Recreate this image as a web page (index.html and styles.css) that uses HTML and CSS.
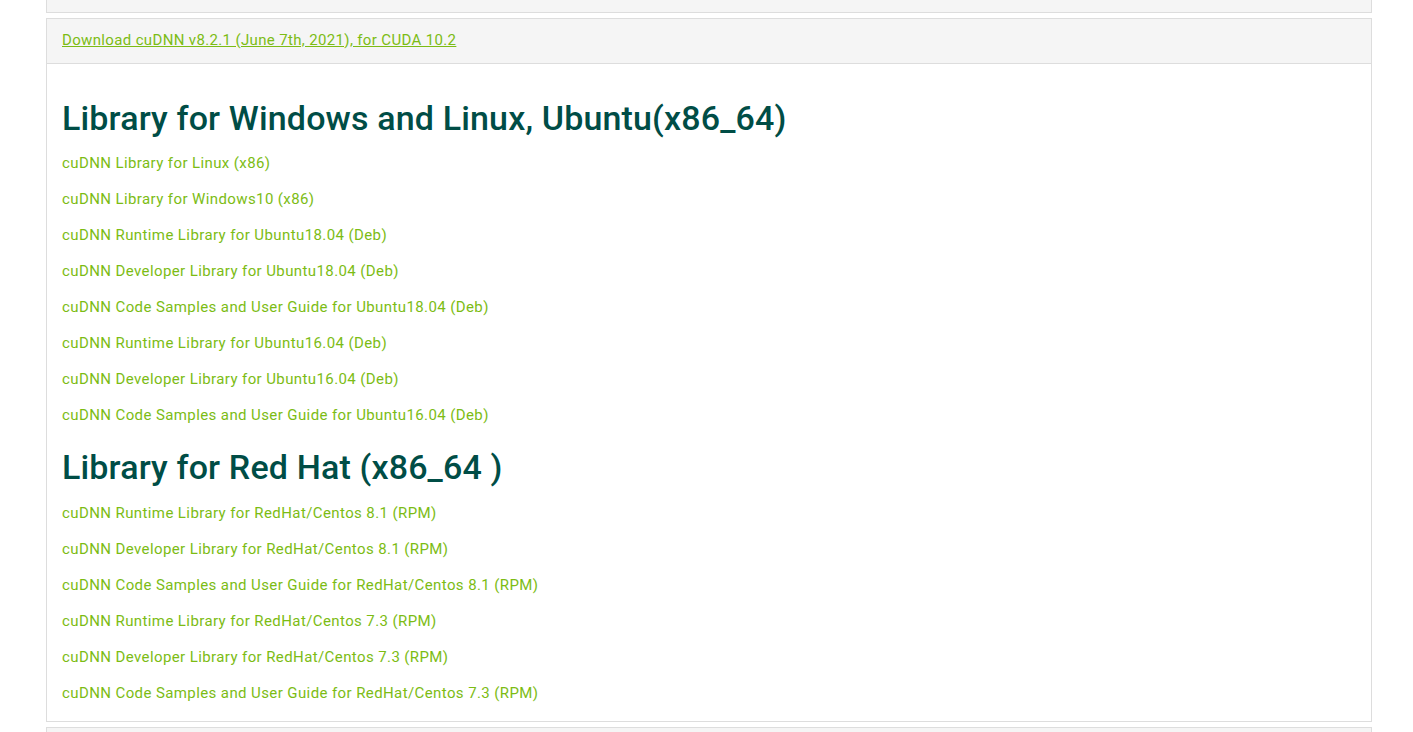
FILE: index.html
```html
<!DOCTYPE html>
<html>
<head>
<meta charset="utf-8">
<link rel="stylesheet" href="styles.css">
</head>
<body>
<div class="page">
  <div class="panel panel-prev"></div>
  <div class="panel">
    <div class="panel-heading"><a class="toggle" href="#">Download cuDNN v8.2.1 (June 7th, 2021), for CUDA 10.2</a></div>
    <div class="panel-body">
      <h2 class="title first">Library for Windows and Linux, Ubuntu(x86_64)</h2>
      <ul class="links">
        <li><a href="#">cuDNN Library for Linux (x86)</a></li>
        <li><a href="#">cuDNN Library for Windows10 (x86)</a></li>
        <li><a href="#">cuDNN Runtime Library for Ubuntu18.04 (Deb)</a></li>
        <li><a href="#">cuDNN Developer Library for Ubuntu18.04 (Deb)</a></li>
        <li><a href="#">cuDNN Code Samples and User Guide for Ubuntu18.04 (Deb)</a></li>
        <li><a href="#">cuDNN Runtime Library for Ubuntu16.04 (Deb)</a></li>
        <li><a href="#">cuDNN Developer Library for Ubuntu16.04 (Deb)</a></li>
        <li><a href="#">cuDNN Code Samples and User Guide for Ubuntu16.04 (Deb)</a></li>
      </ul>
      <h2 class="title second">Library for Red Hat (x86_64 )</h2>
      <ul class="links">
        <li><a href="#">cuDNN Runtime Library for RedHat/Centos 8.1 (RPM)</a></li>
        <li><a href="#">cuDNN Developer Library for RedHat/Centos 8.1 (RPM)</a></li>
        <li><a href="#">cuDNN Code Samples and User Guide for RedHat/Centos 8.1 (RPM)</a></li>
        <li><a href="#">cuDNN Runtime Library for RedHat/Centos 7.3 (RPM)</a></li>
        <li><a href="#">cuDNN Developer Library for RedHat/Centos 7.3 (RPM)</a></li>
        <li><a href="#">cuDNN Code Samples and User Guide for RedHat/Centos 7.3 (RPM)</a></li>
      </ul>
    </div>
  </div>
  <div class="panel panel-next"></div>
</div>
</body>
</html>
```
FILE: styles.css
```css
html, body {
  margin: 0;
  padding: 0;
  background: #ffffff;
  font-family: Roboto, "Liberation Sans", sans-serif;
}
.page {
  padding: 0 41px 0 46px;
  overflow: hidden;
  height: 732px;
}
.panel {
  border: 1px solid #dddddd;
  background: #ffffff;
  margin-bottom: 5px;
}
.panel-prev {
  margin-top: -10px;
  height: 21px;
  background: #f5f5f5;
}
.panel-next {
  height: 40px;
  background: #f5f5f5;
}
.panel-heading {
  background: #f5f5f5;
  border-bottom: 1px solid #dddddd;
  box-sizing: border-box;
  height: 45px;
  padding: 0 15px 3px;
  display: flex;
  align-items: center;
}
.toggle {
  color: #7cbc14;
  font-size: 15px;
  letter-spacing: 0.35px;
  text-decoration: underline;
}
.panel-body {
  padding: 15px 15px 10px;
}
.title {
  color: #004d46;
  font-size: 34px;
  font-weight: 500;
  letter-spacing: 0.15px;
  line-height: 40px;
  margin: 0;
}
.title.first {
  margin: 19px 0 7px;
}
.title.second {
  margin: 14px 0 8px;
}
.links {
  list-style: none;
  margin: 0;
  padding: 0;
}
.links li {
  height: 36px;
  display: flex;
  align-items: center;
}
.links a {
  color: #7cbc14;
  font-size: 15px;
  letter-spacing: 0.4px;
  text-decoration: none;
}
```
